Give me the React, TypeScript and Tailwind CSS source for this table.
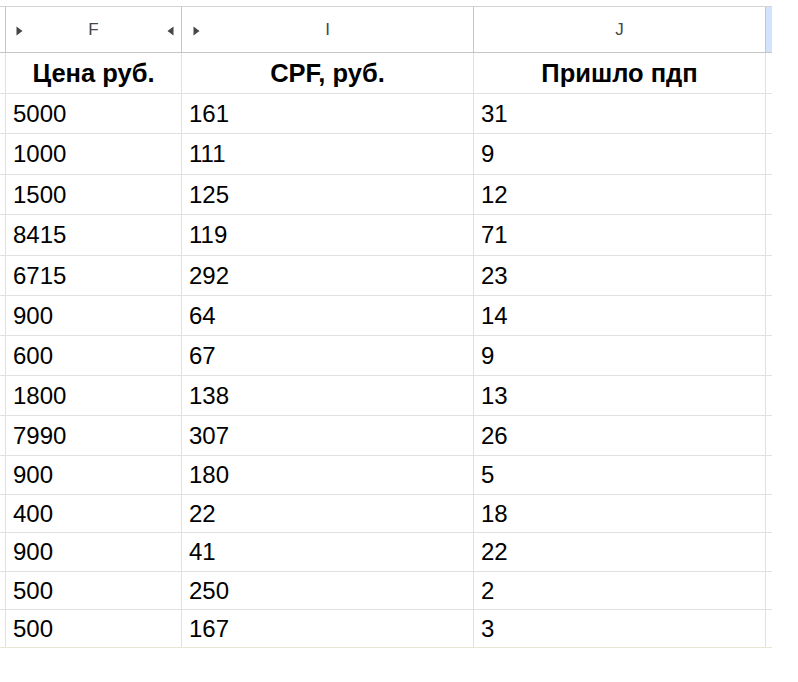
import React from 'react';

const rows: [string, string, string][] = [
  ['5000', '161', '31'],
  ['1000', '111', '9'],
  ['1500', '125', '12'],
  ['8415', '119', '71'],
  ['6715', '292', '23'],
  ['900', '64', '14'],
  ['600', '67', '9'],
  ['1800', '138', '13'],
  ['7990', '307', '26'],
  ['900', '180', '5'],
  ['400', '22', '18'],
  ['900', '41', '22'],
  ['500', '250', '2'],
  ['500', '167', '3'],
];

// the screenshot rows are not all equal height
const rowHeights = [
  'h-[40px]', 'h-[41px]', 'h-[40px]', 'h-[41px]', 'h-[40px]', 'h-[40px]', 'h-[40px]',
  'h-[40px]', 'h-[40px]', 'h-[39px]', 'h-[38px]', 'h-[39px]', 'h-[38px]', 'h-[38px]',
];

function Tri({ dir }: { dir: 'left' | 'right' }) {
  return (
    <svg width="7" height="10" viewBox="0 0 7 10" className="block shrink-0">
      {dir === 'right' ? (
        <polygon points="0.5,0.5 6.5,5 0.5,9.5" fill="#444746" />
      ) : (
        <polygon points="6.5,0.5 0.5,5 6.5,9.5" fill="#444746" />
      )}
    </svg>
  );
}

export default function App() {
  return (
    <div className="min-h-screen bg-white pt-[6px] font-['Liberation_Sans',Arial,sans-serif] text-black">
      <div className="w-[772px] border-t border-[#d3d3d3]">
        {/* column letters */}
        <div className="flex h-[46px] border-b border-[#c4c7c5] text-[17px] text-[#444746]">
          <div className="w-[6px] border-r border-[#c4c7c5]" />
          <div className="relative flex w-[176px] items-center justify-center border-r border-[#c4c7c5]">
            <span className="absolute left-[10px] top-[19px]"><Tri dir="right" /></span>
            F
            <span className="absolute right-[7px] top-[19px]"><Tri dir="left" /></span>
          </div>
          <div className="relative flex w-[292px] items-center justify-center border-r border-[#c4c7c5]">
            <span className="absolute left-[11px] top-[19px]"><Tri dir="right" /></span>
            I
          </div>
          <div className="flex w-[292px] items-center justify-center border-r border-[#c4c7c5]">J</div>
          <div className="w-[6px] bg-[#d3e3fd]" />
        </div>

        {/* titles */}
        <div className="flex h-[41px] border-b border-[#e1e1e1] text-[25.5px] font-bold">
          <div className="w-[6px] border-r border-[#e1e1e1]" />
          <div className="flex w-[176px] items-center justify-center border-r border-[#e1e1e1]">Цена руб.</div>
          <div className="flex w-[292px] items-center justify-center border-r border-[#e1e1e1]">CPF, руб.</div>
          <div className="flex w-[292px] items-center justify-center border-r border-[#e1e1e1]">Пришло пдп</div>
          <div className="w-[6px]" />
        </div>

        {rows.map((r, i) => (
          <div
            key={i}
            className={`flex ${rowHeights[i]} border-b text-[24px] ${
              i === rows.length - 1 ? 'border-[#e8e6d2]' : 'border-[#e1e1e1]'
            }`}
          >
            <div className="w-[6px] border-r border-[#e1e1e1]" />
            <div className="flex w-[176px] items-center border-r border-[#e1e1e1] pl-[7px]">{r[0]}</div>
            <div className="flex w-[292px] items-center border-r border-[#e1e1e1] pl-[7px]">{r[1]}</div>
            <div className="flex w-[292px] items-center border-r border-[#e1e1e1] pl-[7px]">{r[2]}</div>
            <div className="w-[6px]" />
          </div>
        ))}
      </div>
    </div>
  );
}
